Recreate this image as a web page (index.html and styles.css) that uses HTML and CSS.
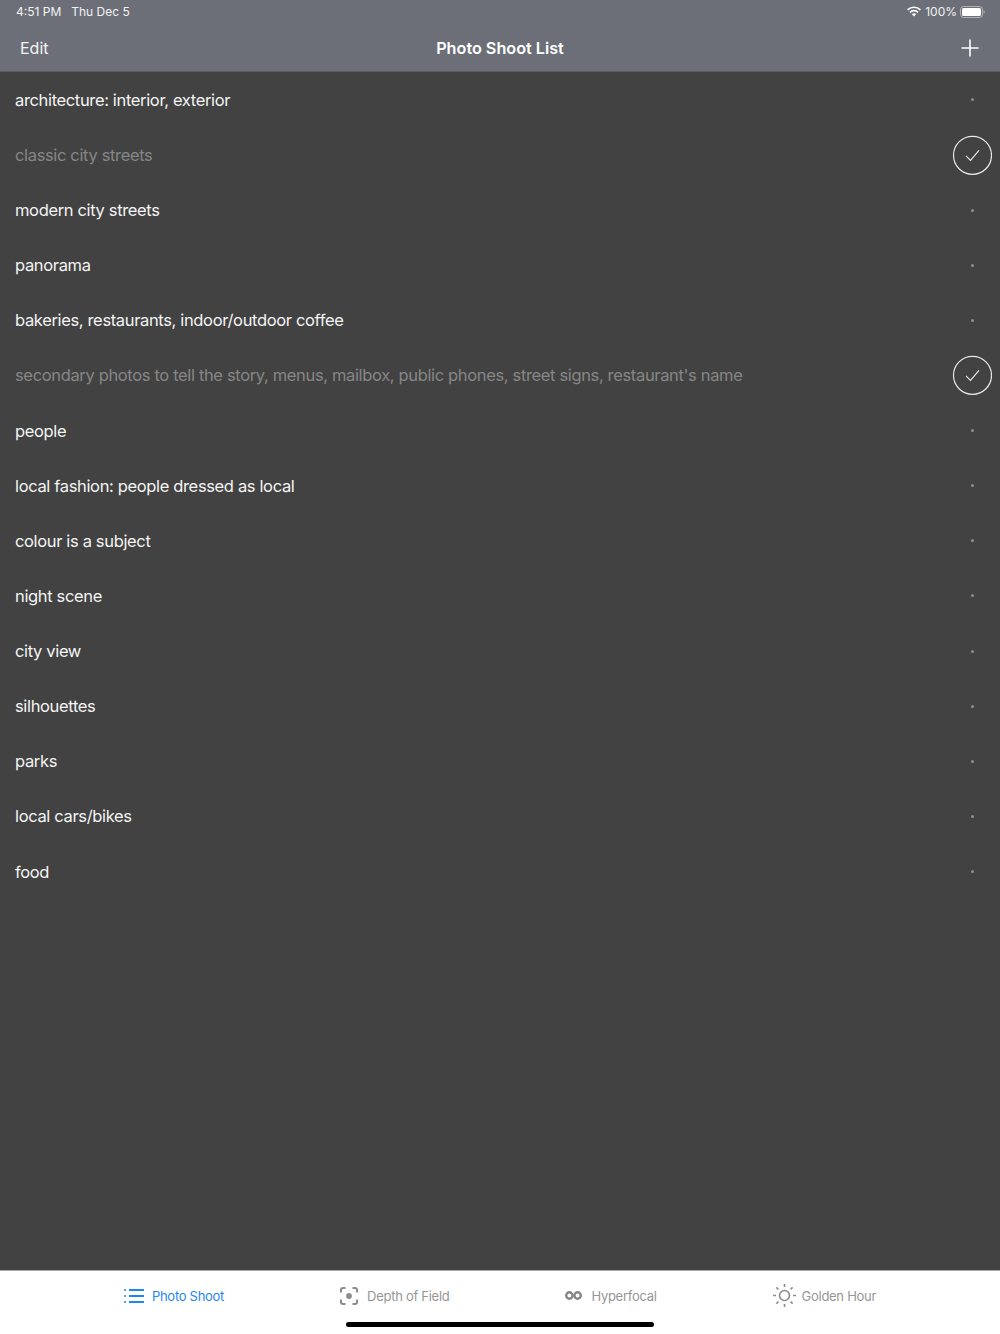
FILE: index.html
```html
<!DOCTYPE html>
<html lang="en">
<head>
<meta charset="utf-8">
<title>Photo Shoot List</title>
<link rel="stylesheet" href="styles.css">
</head>
<body>
<div class="app">
  <header class="header">
    <div class="status">
      <div class="status-left"><span>4:51 PM</span><span>Thu Dec 5</span></div>
      <div class="status-right">
        <svg class="wifi" width="14" height="11" viewBox="0 0 14 11"><path d="M7 10.4 4.9 8.2a3 3 0 0 1 4.2 0zM3.6 6.9 2.4 5.7a6.6 6.6 0 0 1 9.2 0l-1.2 1.2a4.9 4.9 0 0 0-6.8 0zM1.2 4.5 0 3.3a9.9 9.9 0 0 1 14 0l-1.2 1.2a8.2 8.2 0 0 0-11.6 0z" fill="#fff"/></svg>
        <span>100%</span>
        <svg class="battery" width="25" height="12" viewBox="0 0 25 12"><rect x=".5" y=".5" width="22" height="11" rx="3" fill="none" stroke="#fff" stroke-opacity=".45"/><rect x="2" y="2" width="19" height="8" rx="1.6" fill="#fff"/><path d="M23.6 4.2c.7.2 1.1.9 1.1 1.8s-.4 1.6-1.1 1.8z" fill="#fff" fill-opacity=".5"/></svg>
      </div>
    </div>
    <nav class="navbar">
      <span class="nav-edit">Edit</span>
      <h1 class="nav-title">Photo Shoot List</h1>
      <svg class="nav-plus" width="18" height="18" viewBox="0 0 18 18"><path d="M9 .5v17M.5 9h17" stroke="#fff" stroke-width="1.6" fill="none"/></svg>
    </nav>
  </header>

  <main class="list">
    <div class="row"><span class="label">architecture: interior, exterior</span><span class="mark"><i class="dot"></i></span></div>
    <div class="row done"><span class="label">classic city streets</span><span class="mark"><svg class="check" width="40" height="40" viewBox="0 0 40 40"><circle cx="20.5" cy="20.3" r="19" fill="none" stroke="#e8e8e8" stroke-width="1.2"/><path d="m14 20.8 4.5 4.5 8.5-10" fill="none" stroke="#e8e8e8" stroke-width="1.2"/></svg></span></div>
    <div class="row"><span class="label">modern city streets</span><span class="mark"><i class="dot"></i></span></div>
    <div class="row"><span class="label">panorama</span><span class="mark"><i class="dot"></i></span></div>
    <div class="row"><span class="label">bakeries, restaurants, indoor/outdoor coffee</span><span class="mark"><i class="dot"></i></span></div>
    <div class="row done"><span class="label">secondary photos to tell the story, menus, mailbox, public phones, street signs, restaurant's name</span><span class="mark"><svg class="check" width="40" height="40" viewBox="0 0 40 40"><circle cx="20.5" cy="20.3" r="19" fill="none" stroke="#e8e8e8" stroke-width="1.2"/><path d="m14 20.8 4.5 4.5 8.5-10" fill="none" stroke="#e8e8e8" stroke-width="1.2"/></svg></span></div>
    <div class="row"><span class="label">people</span><span class="mark"><i class="dot"></i></span></div>
    <div class="row"><span class="label">local fashion: people dressed as local</span><span class="mark"><i class="dot"></i></span></div>
    <div class="row"><span class="label">colour is a subject</span><span class="mark"><i class="dot"></i></span></div>
    <div class="row"><span class="label">night scene</span><span class="mark"><i class="dot"></i></span></div>
    <div class="row"><span class="label">city view</span><span class="mark"><i class="dot"></i></span></div>
    <div class="row"><span class="label">silhouettes</span><span class="mark"><i class="dot"></i></span></div>
    <div class="row"><span class="label">parks</span><span class="mark"><i class="dot"></i></span></div>
    <div class="row"><span class="label">local cars/bikes</span><span class="mark"><i class="dot"></i></span></div>
    <div class="row"><span class="label">food</span><span class="mark"><i class="dot"></i></span></div>
  </main>

  <footer class="tabbar">
    <div class="tab active">
      <svg width="20" height="14" viewBox="0 0 20 14"><path d="M0 1h2M0 7h2M0 13h2" stroke="#1f86f5" stroke-width="1.6" fill="none"/><path d="M5 1h15M5 7h15M5 13h15" stroke="#1f86f5" stroke-width="2" fill="none"/></svg>
      <span>Photo Shoot</span>
    </div>
    <div class="tab tab-wide">
      <svg width="18" height="18" viewBox="0 0 18 18"><path d="M5.5 1H3a2 2 0 0 0-2 2v2.5M12.5 1H15a2 2 0 0 1 2 2v2.5M5.5 17H3a2 2 0 0 1-2-2v-2.5M12.5 17H15a2 2 0 0 0 2-2v-2.5" stroke="#8c8c8c" stroke-width="2" fill="none"/><circle cx="9" cy="9" r="2.9" fill="#8c8c8c"/></svg>
      <span>Depth of Field</span>
    </div>
    <div class="tab tab-wide">
      <svg width="17" height="9" viewBox="0 0 17 9"><circle cx="4.4" cy="4.5" r="3.2" fill="none" stroke="#858585" stroke-width="2.4"/><circle cx="12.6" cy="4.5" r="3.2" fill="none" stroke="#858585" stroke-width="2.4"/></svg>
      <span>Hyperfocal</span>
    </div>
    <div class="tab tab-sun">
      <svg width="23" height="23" viewBox="0 0 23 23"><circle cx="11.5" cy="11.5" r="5" fill="none" stroke="#8c8c8c" stroke-width="1.6"/><path d="M11.5 0v3M11.5 20v3M0 11.5h3M20 11.5h3M3.4 3.4l2 2M17.6 17.6l2 2M3.4 19.6l2-2M17.6 5.4l2-2" stroke="#8c8c8c" stroke-width="1.6" fill="none"/></svg>
      <span>Golden Hour</span>
    </div>
    <div class="home"></div>
  </footer>
</div>
</body>
</html>
```

FILE: styles.css
```css
* { box-sizing: border-box; }
html, body { margin: 0; padding: 0; height: 100%; }
body { font-family: Inter, "Liberation Sans", sans-serif; background: #424242; overflow: hidden; }
.app { height: 1334px; display: flex; flex-direction: column; }

.header { height: 72px; flex: none; background: #6c6f78; border-bottom: 1px solid #5a5c62; color: #fff; }
.status { height: 23px; padding: 0 15px 0 16px; display: flex; justify-content: space-between; align-items: center; font-size: 12px; color: #f2f2f2; }
.status-left { display: flex; gap: 10px; }
.status-right { display: flex; align-items: center; gap: 4px; }
.battery { margin-left: -1px; }
.navbar { height: 48px; padding: 1px 21px 0 20px; display: flex; align-items: center; justify-content: space-between; position: relative; }
.nav-edit { font-size: 16px; color: #f4f4f4; }
.nav-title { position: absolute; left: 0; right: 0; margin: 0; text-align: center; font-size: 16.2px; font-weight: 600; color: #fff; }

.list { flex: 1; background: #424242; padding-top: 0.3px; }
.row { height: 55.14px; padding-left: 15px; display: flex; align-items: center; justify-content: space-between; color: #f4f4f4; font-size: 16.5px; letter-spacing: -0.35px; }
.row.done .label { color: #868686; }
.mark { width: 56px; flex: none; display: flex; align-items: center; justify-content: center; }
.dot { display: block; width: 3px; height: 3px; border-radius: 50%; background: #8e8e8e; }
.check { display: block; }

.tabbar { height: 64px; flex: none; background: #fff; border-top: 1px solid #a9a9a9; position: relative; display: flex; justify-content: center; gap: 116px; padding-bottom: 14px; }
.tab { display: flex; align-items: center; gap: 8px; font-size: 13px; letter-spacing: -0.28px; color: #969696; }
.tab.active { color: #1f86f5; }
.tab-wide { gap: 9px; }
.tab-sun { gap: 6px; }
.home { position: absolute; left: 346px; top: 51px; width: 308px; height: 5px; border-radius: 3px; background: #000; }
```
